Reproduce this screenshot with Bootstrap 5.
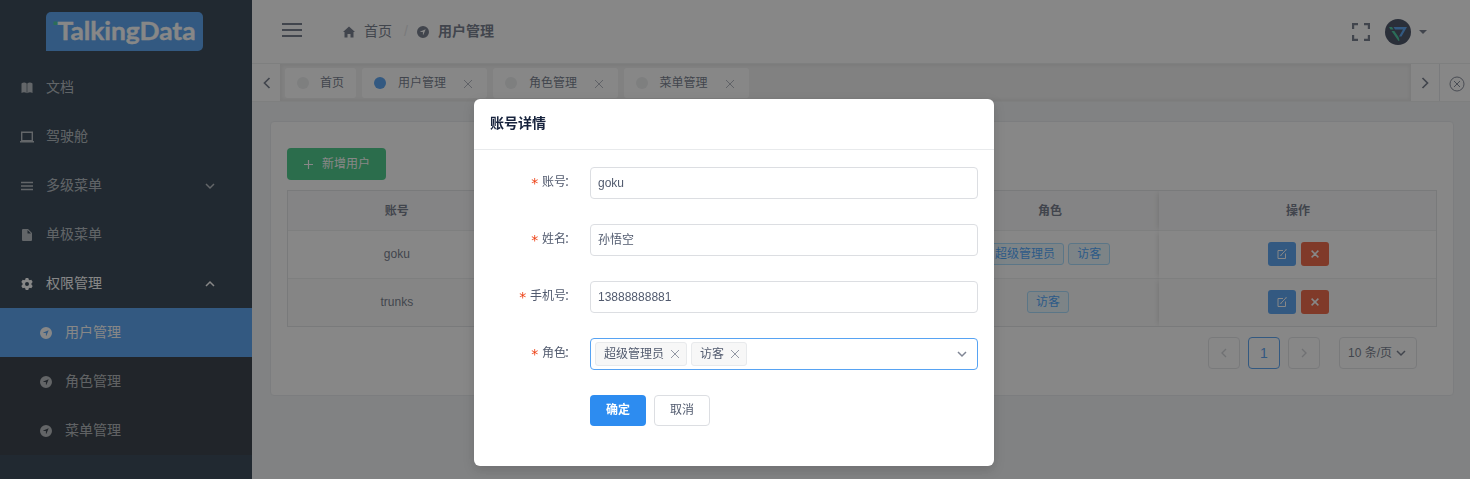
<!DOCTYPE html>
<html lang="zh-CN">
<head>
<meta charset="utf-8">
<title>用户管理</title>
<link href="https://cdn.jsdelivr.net/npm/bootstrap@5.3.0/dist/css/bootstrap.min.css" rel="stylesheet">
<style>
body{font-family:"Liberation Sans","Noto Sans CJK SC",sans-serif;font-size:12px;line-height:1.5;color:#515a6e;background:#f0f2f5;overflow:hidden}
svg{display:block;flex:none}
.side{width:252px;background:#001529;color:rgba(255,255,255,.7)}
.logo-box{height:63px;padding:12px 0 0 46px}
.side-item{height:49px;padding:0 37px 0 21px;font-size:14px;color:rgba(255,255,255,.65)}
.side-item svg{margin-right:13px}
.side-item svg.arrow{margin:0 0 0 auto}
.side-item.opened{color:#fff}
.side-sub{background:#000c17}
.side-sub .side-item{padding-left:40px}
.side-item.current{background:#2d8cf0;color:#fff}
.topbar{height:64px;background:#fff;border-bottom:1px solid #e8eaec;padding:0 43px 0 30px}
.crumbs{font-size:14px;margin-left:41px}
.crumbs .sep{color:#dcdee2;margin:0 9px 0 12px}
.avatar{margin:1px 8px 0 15px}
.tabs-bar{height:38px;background:#f0f0f0;border-bottom:1px solid #e8eaec}
.tabs-bar .side-btn{width:29px;background:#fff}
.tabs-bar .side-btn:first-child{width:28px;padding-left:1px}
.tabs-scroll{box-shadow:inset 0 0 3px 2px rgba(100,100,100,.1);padding:4px 4px 0 5px;gap:6px}
.tab-tag{height:30px;background:#fff;border-radius:3px;padding:0 12px}
.tab-tag .dot{width:12px;height:12px;border-radius:50%;background:#e8eaec;margin-right:11px}
.tab-tag:not(:first-child) .dot{margin-right:12px}
.tab-tag:nth-child(n+3){margin-right:-.5px}
.tab-tag .dot.on{background:#2d8cf0}
.tab-tag svg{margin:2px 2px 0 17px}
.panel{margin:19px 16px 0 18px;height:275px;background:#fff;border:1px solid #e4e7ea;border-radius:4px;padding:26px 16px 0}
.btn{font-size:12px;line-height:1.5;border-radius:4px}
.btn-add{width:99px;height:32px;background:#19be6b;color:#fff;padding:0 16px 0 17px}
.user-table{margin-top:10px;border:1px solid #dcdee2;display:grid;grid-template-columns:repeat(4,1fr) 277px;text-align:center;grid-template-rows:40px 48px 47px}
.user-table>div{display:flex;align-items:center;justify-content:center;border-bottom:1px solid #e8eaec;padding-bottom:1px}
.user-table>.th{font-weight:700;background:#f8f8f9;padding-bottom:0}
.user-table>.odd{background:#fafafa;border-bottom:0}
.user-table>.fixed{box-shadow:-2px 0 6px -2px rgba(0,0,0,.2);clip-path:inset(0 0 0 -8px);padding-left:1px}
.role-tag{height:22px;line-height:20px;padding:0 8px;border:1px solid #91d5ff;background:#e6f7ff;color:#1890ff;border-radius:3px;margin-right:4px}
.btn-op{width:28px;height:24px;border-radius:3px;padding:0;color:#fff}
.pager{margin-top:10px;padding-right:20px}
.pager>div{height:32px;border:1px solid #dcdee2;border-radius:4px}
.pg{width:32px;margin-right:8px;font-size:14px;color:#c5c8ce}
.pg.on{border-color:#2d8cf0!important;color:#2d8cf0}
.pg-size{width:78px;margin-left:11px;padding:0 10px 0 8px}
.modal-backdrop{--bs-backdrop-bg:#373737;--bs-backdrop-opacity:.6}
.modal{padding-right:2px}
.modal-dialog{width:520px;max-width:520px;margin:99px auto 0}
.modal-content{border:0;border-radius:6px;height:367px;box-shadow:0 4px 12px rgba(0,0,0,.15)}
.modal-header{height:51px;padding:0 16px 2px;border-bottom:1px solid #e8eaec}
.modal-title{font-size:14px;font-weight:700;color:#17233d}
.modal-body{padding:17px 16px 0}
.field-row{height:32px;margin-bottom:25px}
.field-label{width:100px;flex:none;padding:0 12px 2px 0;white-space:nowrap}
.field-label i{font:normal 400 14px/1 "DejaVu Sans Mono",monospace;color:#ed4014;margin-right:3px;position:relative;top:1px}
.field-label span{position:relative;left:-2px}
.form-control{height:32px;font-size:12px;color:#515a6e;border:1px solid #dcdee2;border-radius:4px;padding:0 7px}
.pick{border-color:#57a3f3;padding:0 10px 0 4px}
.pick-tag{height:24px;background:#f7f7f7;border:1px solid #e8eaec;border-radius:3px;padding:0 6px 0 8px;margin-right:4px}
.pick-tag svg{margin:0 0 0 6px}
.btn-foot{width:56px;height:31px;padding:0 0 2px}
</style>
</head>
<body>
<svg width="0" height="0" class="position-absolute">
<defs>
<symbol id="x" viewBox="0 0 10 10"><path d="M1 1l8 8M9 1l-8 8" fill="none" stroke="currentColor" stroke-width="1"/></symbol>
<symbol id="down" viewBox="0 0 10 10"><path d="M1 3l4 4 4-4" fill="none" stroke="currentColor" stroke-width="1.5"/></symbol>
<symbol id="up" viewBox="0 0 10 10"><path d="M1 7l4-4 4 4" fill="none" stroke="currentColor" stroke-width="1.5"/></symbol>
<symbol id="left" viewBox="0 0 10 12"><path d="M7.500 1L2.500 6l5 5" fill="none" stroke="currentColor" stroke-width="1.700"/></symbol>
<symbol id="right" viewBox="0 0 10 12"><path d="M2.500 1l5 5-5 5" fill="none" stroke="currentColor" stroke-width="1.700"/></symbol>
<symbol id="nav" viewBox="0 0 12 12"><path fill="currentColor" fill-rule="evenodd" d="M6 0a6 6 0 1 1 0 12A6 6 0 0 1 6 0zM8.700 3.300L3.300 5.600v.5h2.600v2.600h.5z"/></symbol>
<symbol id="edit" viewBox="0 0 10 10"><path d="M6 1.500H1v8h7.500V4.500M3.700 6.500L8.800 1" fill="none" stroke="currentColor" stroke-width="1"/><path d="M3.300 7l.5-1.500 1 1zM8.200.700l1-.7.700.7-.8.800z" fill="currentColor"/></symbol>
</defs>
</svg>
<div class="d-flex vh-100">
  <aside class="side flex-shrink-0">
    <div class="logo-box">
      <svg width="157" height="39" viewBox="0 0 157 39"><path d="M5 0h147a5 5 0 0 1 5 5v29a5 5 0 0 1-5 5H0V5a5 5 0 0 1 5-5z" fill="#2d8cf0"/><rect x="7.500" y="9.500" width="4" height="3.500" fill="#19be8b"/><text x="11.500" y="28" textLength="138" lengthAdjust="spacingAndGlyphs" font-family="Lato" font-weight="700" font-size="25.500" fill="#fff" stroke="#fff" stroke-width=".4">TalkingData</text></svg>
    </div>
    <div class="side-item d-flex align-items-center"><svg width="12" height="12" viewBox="0 0 12 12"><path fill="currentColor" d="M.5 1.500C2 .3 4.300.3 5.700 1.500v9.800C4.300 10 2 10 .5 11zM6.300 1.500c1.400-1.200 3.700-1.200 5.200 0V11c-1.500-1-3.800-1-5.200.3z"/></svg>文档</div>
    <div class="side-item d-flex align-items-center"><svg width="14" height="12" viewBox="0 0 14 12" style="margin-left:-1px;margin-right:12px"><path fill="none" stroke="currentColor" stroke-width="1.400" d="M1.700 1.200h10.600v8.500H1.700zM0 10.800h14"/></svg>驾驶舱</div>
    <div class="side-item d-flex align-items-center"><svg width="12" height="12" viewBox="0 0 12 12"><path stroke="currentColor" stroke-width="1.500" d="M0 2.500h12M0 6h12M0 9.500h12"/></svg>多级菜单<svg class="arrow" width="10" height="10"><use href="#down"/></svg></div>
    <div class="side-item d-flex align-items-center"><svg width="12" height="12" viewBox="0 0 12 12"><path fill="currentColor" fill-rule="evenodd" d="M2 0h5l4 4v7a1 1 0 0 1-1 1H2a1 1 0 0 1-1-1V1a1 1 0 0 1 1-1zm4.500 1v3.500H10z"/></svg>单极菜单</div>
    <div class="side-item opened d-flex align-items-center"><svg width="12" height="12" viewBox="0 0 12 12"><path fill="currentColor" fill-rule="evenodd" d="M4.700 0h2.600l.4 1.600 1 .6 1.600-.5 1.400 2.400L10.500 5.300v1.400l1.200 1.200-1.400 2.400-1.600-.5-1 .6-.4 1.600H4.700l-.4-1.600-1-.6-1.600.5L.3 7.900l1.200-1.200V5.300L.3 4.100l1.400-2.400 1.600.5 1-.6zM6 4a2 2 0 1 0 0 4 2 2 0 0 0 0-4z"/></svg>权限管理<svg class="arrow" width="10" height="10"><use href="#up"/></svg></div>
    <div class="side-sub">
      <div class="side-item current d-flex align-items-center"><svg width="12" height="12"><use href="#nav"/></svg>用户管理</div>
      <div class="side-item d-flex align-items-center"><svg width="12" height="12"><use href="#nav"/></svg>角色管理</div>
      <div class="side-item d-flex align-items-center"><svg width="12" height="12"><use href="#nav"/></svg>菜单管理</div>
    </div>
  </aside>
  <main class="flex-grow-1">
    <header class="topbar d-flex align-items-center">
      <svg width="20" height="14" viewBox="0 0 20 14" style="margin-top:-4px"><path stroke="#515a6e" stroke-width="2" d="M0 1h20M0 7h20M0 13h20"/></svg>
      <div class="crumbs d-flex align-items-center">
        <svg width="12" height="12" viewBox="0 0 12 12" style="margin-right:9px;margin-top:1px"><path fill="#515a6e" d="M6 .5l6 5.500h-1.500v5.500h-3V8h-3v3.500h-3V6H0z"/></svg>首页<span class="sep">/</span>
        <svg width="12" height="12" style="margin-right:9px"><use href="#nav"/></svg><b>用户管理</b>
      </div>
      <svg class="ms-auto" width="18" height="18" viewBox="0 0 18 18"><path fill="none" stroke="#515a6e" stroke-width="2.200" d="M1.100 6V1.100H6M12 1.100h4.900V6M16.900 12v4.900H12M6 16.900H1.100V12"/></svg>
      <svg class="avatar" width="26" height="26" viewBox="0 0 26 26"><circle cx="13" cy="13" r="13" fill="#17233d"/><path fill="#19be8b" d="M4 8h3l1.500 2.500h-3zM6.500 12h2.800l4.200 6 1 3.500-1 .5z"/><path fill="#2d8cf0" fill-rule="evenodd" d="M8.500 8H22l-5.500 9.500h-2.500L18 10.500H10z"/></svg>
      <svg width="8" height="4" viewBox="0 0 8 4"><path fill="#515a6e" d="M0 0h8L4 4z"/></svg>
    </header>
    <div class="tabs-bar d-flex">
      <div class="side-btn d-flex align-items-center justify-content-center"><svg width="10" height="12"><use href="#left"/></svg></div>
      <div class="tabs-scroll flex-grow-1 d-flex">
        <div class="tab-tag d-flex align-items-center"><span class="dot"></span>首页</div>
        <div class="tab-tag d-flex align-items-center"><span class="dot on"></span>用户管理<svg width="10" height="10" opacity=".55"><use href="#x"/></svg></div>
        <div class="tab-tag d-flex align-items-center"><span class="dot"></span>角色管理<svg width="10" height="10" opacity=".55"><use href="#x"/></svg></div>
        <div class="tab-tag d-flex align-items-center"><span class="dot"></span>菜单管理<svg width="10" height="10" opacity=".55"><use href="#x"/></svg></div>
      </div>
      <div class="side-btn border-end d-flex align-items-center justify-content-center"><svg width="10" height="12"><use href="#right"/></svg></div>
      <div class="side-btn d-flex align-items-center justify-content-center" style="width:30px"><svg width="16" height="16" viewBox="0 0 16 16" style="margin:2px 0 0 4px"><circle cx="8" cy="8" r="7" fill="none" stroke="#515a6e" stroke-width=".9"/><path stroke="#515a6e" stroke-width=".9" d="M5 5l6 6M11 5l-6 6"/></svg></div>
    </div>
    <section class="panel">
      <button class="btn btn-add d-flex align-items-center justify-content-between border-0"><svg width="10" height="10" viewBox="0 0 10 10"><path stroke="#fff" stroke-width="1.200" d="M0 5.500h9M4.500 1v9"/></svg>新增用户</button>
      <div class="user-table">
        <div class="th">账号</div><div class="th">姓名</div><div class="th">手机</div><div class="th">角色</div><div class="th fixed">操作</div>
        <div>goku</div><div></div><div></div><div><span class="role-tag">超级管理员</span><span class="role-tag">访客</span></div>
        <div class="fixed"><button class="btn btn-op border-0 d-flex align-items-center justify-content-center" style="background:#2d8cf0;margin-right:5px"><svg width="10" height="10"><use href="#edit"/></svg></button><button class="btn btn-op border-0 d-flex align-items-center justify-content-center" style="background:#ed4014"><svg width="8" height="8" viewBox="0 0 8 8"><path stroke="#fff" stroke-width="1.500" d="M.6.6l6.800 6.800M7.400.6L.6 7.400"/></svg></button></div>
        <div class="odd">trunks</div><div class="odd"></div><div class="odd"></div><div class="odd"><span class="role-tag">访客</span></div>
        <div class="odd fixed"><button class="btn btn-op border-0 d-flex align-items-center justify-content-center" style="background:#2d8cf0;margin-right:5px"><svg width="10" height="10"><use href="#edit"/></svg></button><button class="btn btn-op border-0 d-flex align-items-center justify-content-center" style="background:#ed4014"><svg width="8" height="8" viewBox="0 0 8 8"><path stroke="#fff" stroke-width="1.500" d="M.6.6l6.800 6.800M7.400.6L.6 7.400"/></svg></button></div>
      </div>
      <div class="pager d-flex justify-content-end">
        <div class="pg d-flex align-items-center justify-content-center"><svg width="8" height="10"><use href="#left"/></svg></div>
        <div class="pg on d-flex align-items-center justify-content-center">1</div>
        <div class="pg d-flex align-items-center justify-content-center"><svg width="8" height="10"><use href="#right"/></svg></div>
        <div class="pg-size d-flex align-items-center justify-content-between">10 条/页<svg width="10" height="10"><use href="#down"/></svg></div>
      </div>
    </section>
  </main>
</div>
<div class="modal-backdrop show"></div>
<div class="modal d-block" tabindex="-1">
  <div class="modal-dialog">
    <div class="modal-content">
      <div class="modal-header"><div class="modal-title">账号详情</div></div>
      <div class="modal-body">
        <div class="field-row d-flex"><div class="field-label d-flex align-items-center justify-content-end"><i>*</i>账号<span>：</span></div><div class="form-control d-flex align-items-center">goku</div></div>
        <div class="field-row d-flex"><div class="field-label d-flex align-items-center justify-content-end"><i>*</i>姓名<span>：</span></div><div class="form-control d-flex align-items-center">孙悟空</div></div>
        <div class="field-row d-flex"><div class="field-label d-flex align-items-center justify-content-end"><i>*</i>手机号<span>：</span></div><div class="form-control d-flex align-items-center">13888888881</div></div>
        <div class="field-row d-flex"><div class="field-label d-flex align-items-center justify-content-end"><i>*</i>角色<span>：</span></div>
          <div class="form-control pick d-flex align-items-center"><span class="pick-tag d-flex align-items-center">超级管理员<svg width="10" height="10" opacity=".6"><use href="#x"/></svg></span><span class="pick-tag d-flex align-items-center">访客<svg width="10" height="10" opacity=".6"><use href="#x"/></svg></span><svg class="ms-auto" width="10" height="10" style="color:#808695"><use href="#down"/></svg></div></div>
        <div class="d-flex gap-2" style="padding-left:100px"><button class="btn btn-foot border-0 text-white" style="background:#2d8cf0"><b>确定</b></button><button class="btn btn-foot" style="border-color:#dcdee2;color:#515a6e">取消</button></div>
      </div>
    </div>
  </div>
</div>
<script src="https://cdn.jsdelivr.net/npm/bootstrap@5.3.0/dist/js/bootstrap.bundle.min.js"></script>
</body>
</html>
